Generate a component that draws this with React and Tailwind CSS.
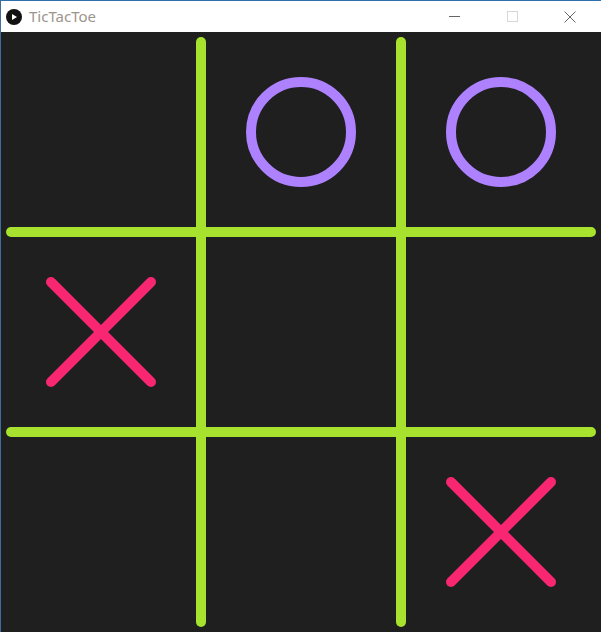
import React from 'react';

const board = [
  ['', 'O', 'O'],
  ['X', '', ''],
  ['', '', 'X'],
];

function Mark({ type, cx, cy }) {
  if (type === 'O') {
    return <circle cx={cx} cy={cy} r="50" fill="none" stroke="#ae81ff" strokeWidth="10" />;
  }
  if (type === 'X') {
    return (
      <g stroke="#f92672" strokeWidth="10" strokeLinecap="round">
        <line x1={cx - 50} y1={cy - 50} x2={cx + 50} y2={cy + 50} />
        <line x1={cx + 50} y1={cy - 50} x2={cx - 50} y2={cy + 50} />
      </g>
    );
  }
  return null;
}

function TitleBar() {
  return (
    <div className="flex h-[32px] items-center border-t border-[#2f6fae] bg-white">
      <div className="ml-[5px] flex h-[16px] w-[16px] items-center justify-center rounded-full bg-[#111]">
        <svg width="8" height="8" viewBox="0 0 8 8">
          <path d="M2 1 L7 4 L2 7 Z" fill="#fff" />
        </svg>
      </div>
      <span
        className="ml-[7px] text-[15px] leading-none text-[#9c948c]"
        style={{ fontFamily: '"Noto Sans", "Open Sans", sans-serif' }}
      >
        TicTacToe
      </span>
      <div className="ml-auto mr-[2px] flex h-full">
        <button className="flex h-full w-[58px] items-center justify-center">
          <span className="block h-px w-[11px] bg-[#666]" />
        </button>
        <button className="flex h-full w-[58px] items-center justify-center">
          <span className="block h-[11px] w-[11px] border border-[#d8d8d8]" />
        </button>
        <button className="flex h-full w-[58px] items-center justify-center">
          <svg width="12" height="12" viewBox="0 0 12 12">
            <path d="M0.5 0.5 L11.5 11.5 M11.5 0.5 L0.5 11.5" stroke="#666" strokeWidth="1" />
          </svg>
        </button>
      </div>
    </div>
  );
}

export default function App() {
  return (
    <div className="flex h-[632px] w-[601px] flex-col overflow-hidden border-l border-[#3a6f9e] bg-[#1f1f1f]">
      <TitleBar />
      <div className="h-[600px] w-[600px] bg-[#1f1f1f]">
        <svg width="600" height="600" viewBox="0 0 600 600">
          <g stroke="#a6e22e" strokeWidth="10" strokeLinecap="round">
            <line x1="200" y1="10" x2="200" y2="590" />
            <line x1="400" y1="10" x2="400" y2="590" />
            <line x1="10" y1="200" x2="590" y2="200" />
            <line x1="10" y1="400" x2="590" y2="400" />
          </g>
          {board.map((row, r) =>
            row.map((cell, c) => (
              <Mark key={`${r}-${c}`} type={cell} cx={c * 200 + 100} cy={r * 200 + 100} />
            ))
          )}
        </svg>
      </div>
    </div>
  );
}
